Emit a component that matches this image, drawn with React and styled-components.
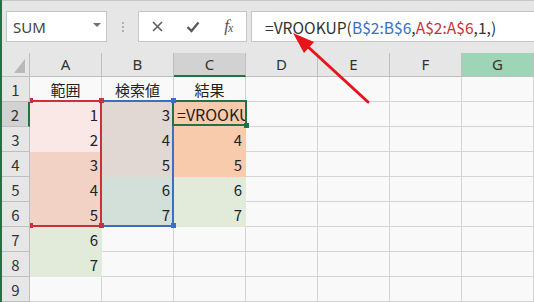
import React from 'react';
import styled, { createGlobalStyle } from 'styled-components';

const GlobalStyle = createGlobalStyle`
  html, body { margin: 0; padding: 0; background: #f9f9f9; }
  body { width: 534px; height: 302px; overflow: hidden; font-family: "Noto Sans CJK JP", "Noto Sans", sans-serif; }
`;

const Page = styled.div`
  position: relative;
  width: 534px;
  height: 302px;
  overflow: hidden;
  background: #e6e6e6;
  &::before {
    content: '';
    position: absolute;
    left: 0; top: 0; bottom: 0;
    width: 2px;
    background: #217346;
    z-index: 6;
  }
`;

const Toolbar = styled.div`
  box-sizing: border-box;
  height: 53px;
  border-top: 1px solid #c8c8c8;
  padding: 10px 0 0 6px;
  display: flex;
  align-items: flex-start;
`;

const NameBox = styled.div`
  box-sizing: border-box;
  width: 101px;
  height: 31px;
  background: #fff;
  border: 1px solid #c6c6c6;
  display: flex;
  align-items: center;
  justify-content: space-between;
  padding: 0 5px 0 6px;
  font-family: "Noto Sans", sans-serif;
  font-size: 15px;
  color: #444;
`;

const DropArrow = styled.span`
  width: 0; height: 0;
  border-left: 4px solid transparent;
  border-right: 4px solid transparent;
  border-top: 4px solid #707070;
  margin-top: -3px;
`;

const Grip = styled.div`
  width: 31px;
  height: 31px;
  display: flex;
  flex-direction: column;
  align-items: center;
  justify-content: center;
  gap: 2px;
`;

const Dot = styled.span`
  width: 2px; height: 2px; background: #b0b0b0;
`;

const ButtonBox = styled.div`
  box-sizing: border-box;
  width: 109px;
  height: 31px;
  background: #fff;
  border: 1px solid #c6c6c6;
  display: grid;
  grid-template-columns: repeat(3, 1fr);
  align-items: center;
  justify-items: center;
  padding-left: 1px;
  margin-right: 4px;
`;

const Fx = styled.span`
  font-family: "Liberation Serif", serif;
  font-style: italic;
  font-size: 17px;
  line-height: 1;
  color: #555;
  letter-spacing: -1px;
  margin-top: -2px;
  & sub { font-size: 12px; vertical-align: -1px; }
`;

const FormulaBox = styled.div`
  box-sizing: border-box;
  flex: 1;
  height: 31px;
  margin-right: -2px;
  background: #fff;
  border: 1px solid #c6c6c6;
  display: flex;
  align-items: center;
  padding-left: 13px;
  font-size: 15.6px;
  color: #333;
  white-space: nowrap;
`;

const Ref = styled.span`
  color: ${p => p.$c};
`;

const GridWrap = styled.div`
  position: relative;
`;

const Grid = styled.div`
  display: grid;
  grid-template-columns: 30px repeat(7, 72px);
  grid-template-rows: 24px repeat(9, 25px);
`;

const Corner = styled.div`
  box-sizing: border-box;
  background: #e6e6e6;
  border-right: 1px solid #bfbfbf;
  border-bottom: 1px solid #bfbfbf;
  position: relative;
  &::after {
    content: '';
    position: absolute;
    right: 4px; bottom: 3px;
    width: 0; height: 0;
    border-left: 11px solid transparent;
    border-bottom: 14px solid #b9b9b9;
  }
`;

const ColHead = styled.div`
  box-sizing: border-box;
  background: ${p => (p.$sel ? '#d2d2d2' : p.$hl ? '#9fd5b7' : '#e6e6e6')};
  border-right: 1px solid #bfbfbf;
  border-bottom: ${p => (p.$sel ? '2px solid #217346' : '1px solid #bfbfbf')};
  display: flex;
  align-items: center;
  justify-content: center;
  font-family: "Noto Sans", sans-serif;
  font-size: 15px;
  color: #333;
  padding-bottom: ${p => (p.$sel ? '0' : '1px')};
`;

const RowHead = styled.div`
  box-sizing: border-box;
  background: ${p => (p.$sel ? '#d2d2d2' : '#e6e6e6')};
  border-right: ${p => (p.$sel ? '2px solid #217346' : '1px solid #bfbfbf')};
  border-bottom: 1px solid #bfbfbf;
  display: flex;
  align-items: center;
  justify-content: center;
  font-size: 15px;
  color: #333;
  line-height: 1;
  padding-left: 2px;
`;

const Cell = styled.div`
  box-sizing: border-box;
  background: ${p => p.$fill || '#f9f9f9'};
  border-right: 1px solid ${p => p.$fill || '#d4d4d4'};
  border-bottom: 1px solid ${p => p.$fill || '#d4d4d4'};
  display: flex;
  align-items: center;
  justify-content: ${p => p.$align};
  padding: 0 3px 0 3px;
  font-size: ${p => (p.$big ? '16px' : '15px')};
  line-height: 1;
  color: #222;
  white-space: nowrap;
  overflow: hidden;
`;

const RangeBox = styled.div`
  position: absolute;
  box-sizing: border-box;
  left: ${p => p.$x}px;
  top: ${p => p.$y}px;
  width: ${p => p.$w}px;
  height: ${p => p.$h}px;
  border: 2px solid ${p => p.$c};
  ${p => (p.$noLeft ? 'border-left: none;' : '')}
  pointer-events: none;
  z-index: 2;
`;

const Handle = styled.div`
  position: absolute;
  left: ${p => p.$x}px;
  top: ${p => p.$y}px;
  width: ${p => p.$w || 5}px;
  height: 5px;
  background: ${p => p.$c};
  z-index: 3;
`;

const ArrowLayer = styled.svg`
  position: absolute;
  left: 0; top: 0;
  width: 534px;
  height: 302px;
  pointer-events: none;
  z-index: 10;
`;

const FILL = {
  pink: '#f9e8e6',
  salmon: '#f2d2c4',
  taupe: '#e2d8d3',
  sage: '#d3e0da',
  orange: '#f8cbad',
  green: '#e2ebda',
};

const COLS = ['A', 'B', 'C', 'D', 'E', 'F', 'G'];

const ROWS = [
  [{ t: '範囲', c: true }, { t: '検索値', c: true }, { t: '結果', c: true }],
  [{ t: '1', f: 'pink' }, { t: '3', f: 'taupe' }, { t: '=VROOKUP(B$2:B$6,A$2:A$6,1,)', f: 'orange', l: true }],
  [{ t: '2', f: 'pink' }, { t: '4', f: 'taupe' }, { t: '4', f: 'orange' }],
  [{ t: '3', f: 'salmon' }, { t: '5', f: 'taupe' }, { t: '5', f: 'orange' }],
  [{ t: '4', f: 'salmon' }, { t: '6', f: 'sage' }, { t: '6', f: 'green' }],
  [{ t: '5', f: 'salmon' }, { t: '7', f: 'sage' }, { t: '7', f: 'green' }],
  [{ t: '6', f: 'green' }],
  [{ t: '7', f: 'green' }],
  [],
];

const RED = '#c8323a';
const BLUE = '#3b6fc6';
const GREEN = '#217346';

export default function App() {
  // grid starts at y = 53 on the page
  const gy = 53;
  return (
    <Page>
      <GlobalStyle />
      <Toolbar>
        <NameBox>
          <span>SUM</span>
          <DropArrow />
        </NameBox>
        <Grip>
          <Dot /><Dot /><Dot />
        </Grip>
        <ButtonBox>
          <svg width="11" height="11" viewBox="0 0 11 11">
            <path d="M1 1 L10 10 M10 1 L1 10" stroke="#5a5a5a" strokeWidth="1.5" fill="none" />
          </svg>
          <svg width="14" height="12" viewBox="0 0 14 12">
            <path d="M1.5 6 L5.5 10 L12.5 1.5" stroke="#5a5a5a" strokeWidth="2.4" fill="none" />
          </svg>
          <Fx>f<sub>x</sub></Fx>
        </ButtonBox>
        <FormulaBox>
          <span>=VROOKUP(</span>
          <Ref $c={BLUE}>B$2:B$6</Ref>
          <span>,</span>
          <Ref $c={RED}>A$2:A$6</Ref>
          <span>,1,)</span>
        </FormulaBox>
      </Toolbar>
      <GridWrap>
        <Grid>
          <Corner />
          {COLS.map(c => (
            <ColHead key={c} $sel={c === 'C'} $hl={c === 'G'}>{c}</ColHead>
          ))}
          {ROWS.map((row, ri) => (
            <React.Fragment key={ri}>
              <RowHead $sel={ri === 1}>{ri + 1}</RowHead>
              {COLS.map((c, ci) => {
                const d = row[ci];
                return (
                  <Cell
                    key={c}
                    $fill={d && d.f ? FILL[d.f] : null}
                    $align={d && d.c ? 'center' : d && d.l ? 'flex-start' : 'flex-end'}
                    $big={d && d.l}
                  >
                    {d ? d.t : ''}
                  </Cell>
                );
              })}
            </React.Fragment>
          ))}
        </Grid>
        <RangeBox $x={30} $y={100 - gy} $w={72} $h={127} $c={RED} $noLeft />
        <RangeBox $x={102} $y={100 - gy} $w={72} $h={127} $c={BLUE} $noLeft />
        <Handle $x={30} $y={98 - gy} $w={3} $c={RED} />
        <Handle $x={99} $y={98 - gy} $c={RED} />
        <Handle $x={30} $y={223 - gy} $w={3} $c={RED} />
        <Handle $x={99} $y={223 - gy} $c={RED} />
        <Handle $x={171} $y={98 - gy} $c={BLUE} />
        <Handle $x={171} $y={223 - gy} $c={BLUE} />
        <RangeBox $x={172} $y={100 - gy} $w={75} $h={26} $c={GREEN} />
        <Handle $x={244} $y={123 - gy} $c={GREEN} />
      </GridWrap>
      <ArrowLayer viewBox="0 0 534 302">
        <line x1="368" y1="102" x2="306" y2="45" stroke="#e8141b" strokeWidth="3" strokeLinecap="round" />
        <polygon points="293,33 314,42 304,53" fill="#e8141b" />
      </ArrowLayer>
    </Page>
  );
}
